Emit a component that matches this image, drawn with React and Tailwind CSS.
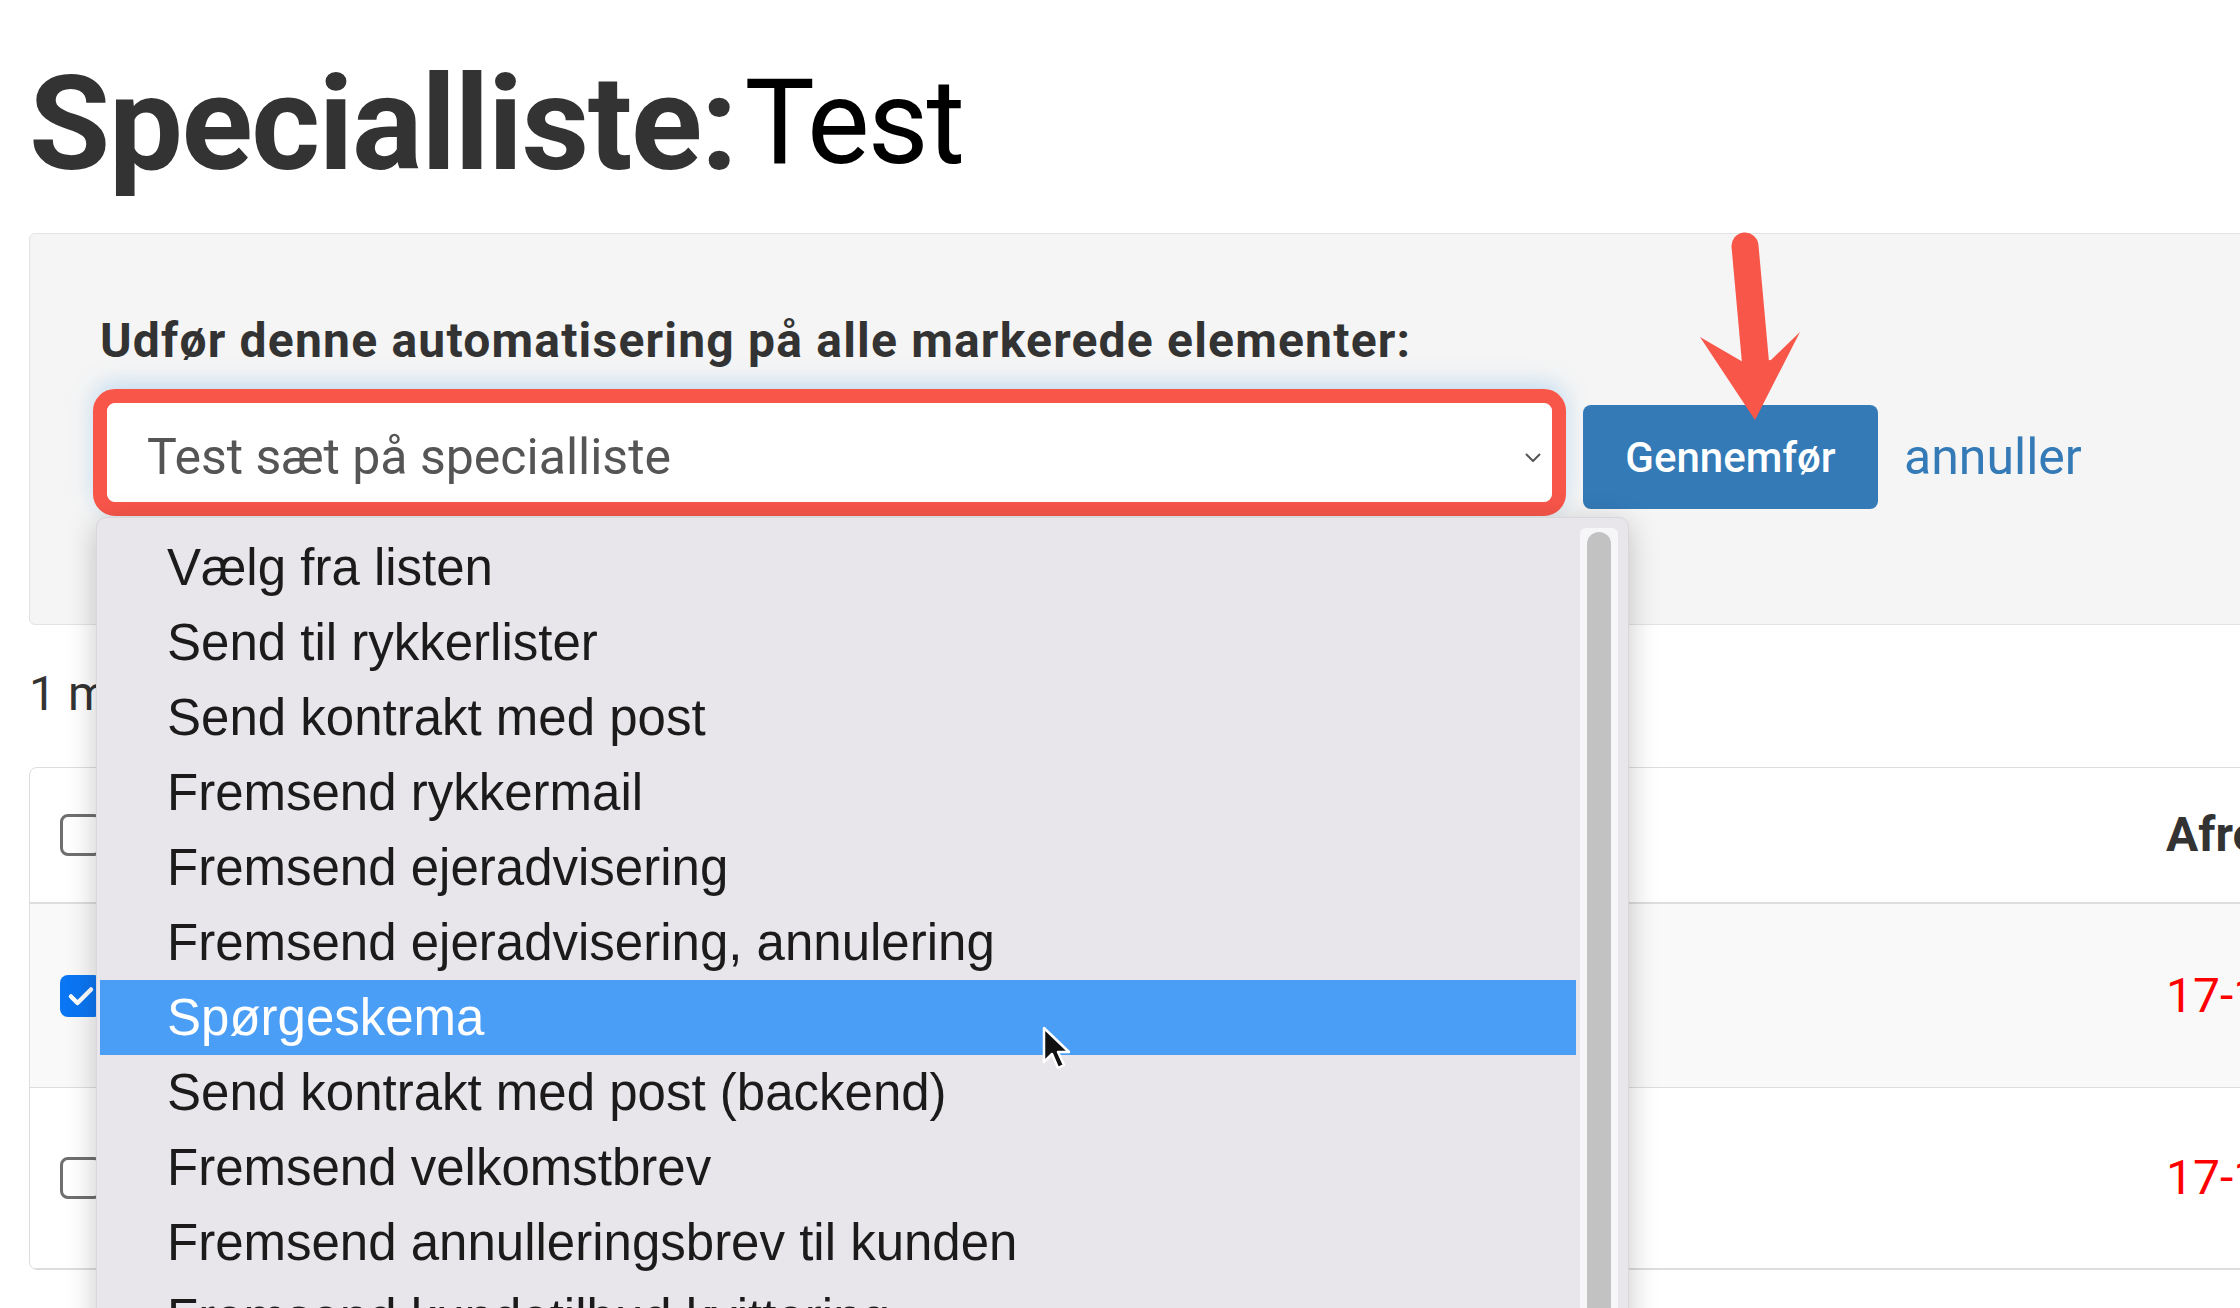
import React from "react";

const options = [
  "Vælg fra listen",
  "Send til rykkerlister",
  "Send kontrakt med post",
  "Fremsend rykkermail",
  "Fremsend ejeradvisering",
  "Fremsend ejeradvisering, annulering",
  "Spørgeskema",
  "Send kontrakt med post (backend)",
  "Fremsend velkomstbrev",
  "Fremsend annulleringsbrev til kunden",
  "Fremsend kundetilbud kvittering",
];

function Checkbox({ checked }) {
  if (checked) {
    return (
      <div className="flex h-[42px] w-[42px] items-center justify-center rounded-[8px] bg-[#0b76f3]">
        <svg width="28" height="22" viewBox="0 0 28 22" fill="none">
          <path d="M4 11.5l6.5 6.5L24 4.5" stroke="white" strokeWidth="4.5" strokeLinecap="round" strokeLinejoin="round" />
        </svg>
      </div>
    );
  }
  return <div className="h-[42px] w-[42px] rounded-[8px] border-[3px] border-[#6f6f6f] bg-white" />;
}

export default function App() {
  return (
    <div className="relative h-[1308px] w-[2240px] overflow-hidden bg-white font-['Roboto',sans-serif] text-[#333]">
      <div className="pl-[29px] pt-[57px]">
        <h1 className="whitespace-nowrap text-[132px] font-bold leading-[132px] tracking-[-1.5px]">
          Specialliste:
          <span className="ml-[8px] inline-block align-[6px] text-[118px] font-normal tracking-[-2px] text-black">Test</span>
        </h1>

        <div className="mt-[43px] h-[392px] w-[2300px] rounded-[6px] border border-[#e3e3e3] bg-[#f5f5f5] pl-[63px] pt-[79px]">
          <div className="whitespace-nowrap pl-[7px] text-[48px] font-bold leading-[55px] tracking-[1.2px]">
            Udfør denne automatisering på alle markerede elementer:
          </div>
          <div className="mt-[21px] flex items-start">
            <div className="h-[127px] w-[1473px] rounded-[22px] border-[14px] border-[#f9564a] shadow-[0_-6px_22px_rgba(102,175,233,0.35)]">
              <div className="flex h-full items-center rounded-[9px] bg-white pl-[40px] pr-[11px]">
                <span className="flex-1 whitespace-nowrap pt-[8px] text-[50px] leading-[60px] text-[#555]">
                  Test sæt på specialliste
                </span>
                <svg width="16" height="10" viewBox="0 0 16 10" fill="none" className="mt-[10px]">
                  <path d="M1.5 1.5L8 8l6.5-6.5" stroke="#555" strokeWidth="2" strokeLinecap="round" strokeLinejoin="round" />
                </svg>
              </div>
            </div>
            <button
              type="button"
              className="ml-[17px] mt-[16px] flex h-[104px] w-[295px] items-center justify-center rounded-[8px] bg-[#337ab7] text-[42px] font-medium text-white"
            >
              Gennemfør
            </button>
            <span className="ml-[26px] mt-[16px] flex h-[104px] items-center text-[50px] text-[#337ab7]">annuller</span>
          </div>
        </div>

        <div className="mt-[41px] whitespace-nowrap text-[48px] leading-[56px]">1 markeret element</div>

        <div className="mt-[45px] w-[2300px] overflow-hidden rounded-[8px] border border-[#ddd]">
          <div className="flex h-[136px] items-center border-b-2 border-[#ddd]">
            <div className="w-[2136px] shrink-0 pl-[30px]">
              <Checkbox />
            </div>
            <span className="whitespace-nowrap text-[48px] font-bold">Afregningsdato</span>
          </div>
          <div className="flex h-[184px] items-center border-b border-[#ddd] bg-[#f9f9f9]">
            <div className="w-[2136px] shrink-0 pl-[30px]">
              <Checkbox checked />
            </div>
            <span className="whitespace-nowrap text-[48px] text-[#ff0000]">17-11-2021</span>
          </div>
          <div className="flex h-[181px] items-center border-b border-[#ddd]">
            <div className="w-[2136px] shrink-0 pl-[30px]">
              <Checkbox />
            </div>
            <span className="whitespace-nowrap text-[48px] text-[#ff0000]">17-11-2021</span>
          </div>
        </div>
      </div>

      {/* native select menu, open */}
      <div className="absolute left-[96px] top-[517px] flex h-[820px] w-[1533px] rounded-t-[10px] border border-[#d9d7dc] bg-[#e8e6ea] shadow-[0_6px_30px_rgba(0,0,0,0.22)]">
        <div className="ml-[3px] w-[1476px] shrink-0 pt-[12px] font-['Liberation_Sans',Arial,sans-serif]">
          {options.map((o, i) => (
            <div
              key={o}
              className={`flex h-[75px] items-center whitespace-nowrap pl-[67px] text-[51px] leading-[60px] ${
                i === 6 ? "bg-[#4b9ef6] text-white" : "text-[#1b1b1b]"
              }`}
            >
              {o}
            </div>
          ))}
        </div>
        <div className="ml-[4px] mt-[10px] flex w-[38px] justify-center rounded-t-[6px] bg-[#f6f5f7] pt-[4px]">
          <div className="h-full w-[24px] rounded-full bg-[#c2c2c2]" />
        </div>
      </div>

      {/* mouse cursor */}
      <svg className="absolute left-[1042px] top-[1026px]" width="30" height="46" viewBox="0 0 30 46">
        <path d="M2 2v34l8-8 6 14 6-3-6-13h11z" fill="#111" stroke="white" strokeWidth="2.5" strokeLinejoin="round" />
      </svg>

      {/* red annotation arrow */}
      <svg className="absolute left-[1680px] top-[220px]" width="140" height="210" viewBox="0 0 140 210">
        <path d="M65 26L76 148" stroke="#f9564a" strokeWidth="27" strokeLinecap="round" />
        <path d="M20 117L63 142L91 140L120 112L75 200Z" fill="#f9564a" />
      </svg>
    </div>
  );
}
